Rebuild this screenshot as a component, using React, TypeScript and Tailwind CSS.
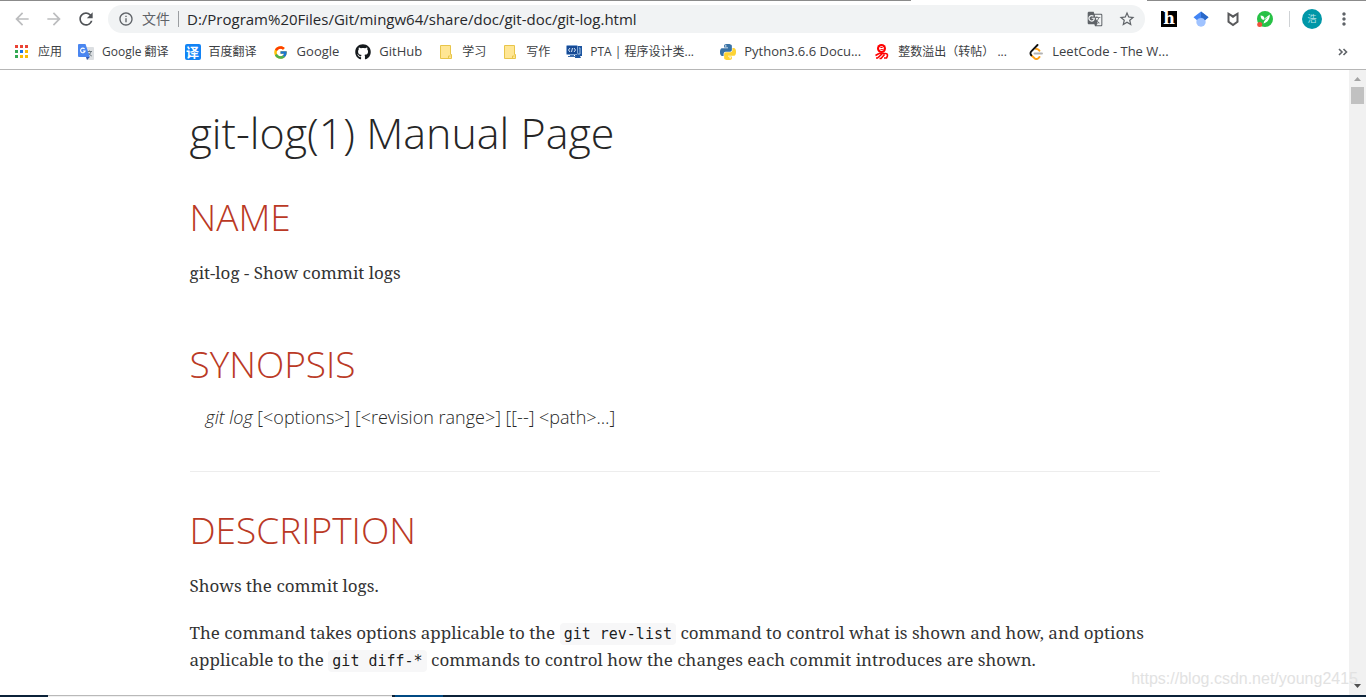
// App.tsx
// ================================================================
// GIT-LOG MANUAL PAGE
// ================================================================
// A browser window (toolbar + bookmarks bar) showing the local
// git-log documentation page.
// ================================================================

import React from "react";
import { FaGithub } from "react-icons/fa";
import { FcGoogle } from "react-icons/fc";
import {
  MdArrowBack,
  MdArrowForward,
  MdGTranslate,
  MdInfoOutline,
  MdMoreVert,
  MdRefresh,
  MdStarBorder,
} from "react-icons/md";

interface Bookmark {
  label: string;
  icon: React.ReactNode;
  wide?: boolean;
  /** Latin-only titles are set one step larger */
  latin?: boolean;
}

// ── Bookmark icons ─────────────────────────────────────────────
const APP_COLORS = [
  "#ea4335", "#ea4335", "#ea4335",
  "#34a853", "#1a73e8", "#fbbc04",
  "#34a853", "#fbbc04", "#fbbc04",
];

function AppsIcon() {
  return (
    <svg viewBox="0 0 16 16" className="size-4" aria-hidden="true">
      {APP_COLORS.map((fill, i) => (
        <rect key={i} x={1 + (i % 3) * 5} y={1 + Math.floor(i / 3) * 5} width="3" height="3" fill={fill} />
      ))}
    </svg>
  );
}

function TranslateIcon() {
  return (
    <svg viewBox="0 0 16 16" className="size-4" aria-hidden="true">
      <path d="M6 3h9a1 1 0 0 1 1 1v11a1 1 0 0 1-1 1H9z" fill="#dcdfe2" />
      <path d="M9 7.500h5M11.500 6.500v1M13 7.500c-.5 2-2 3.500-3.500 4.500M10.500 9c.7 1.300 2 2.500 3.300 3" stroke="#6f7a80" fill="none" />
      <path d="M1 0h6.500l4.300 13H1a1 1 0 0 1-1-1V1a1 1 0 0 1 1-1z" fill="#4a86f0" />
      <path d="M8 13h3.800L9 16z" fill="#3057b0" />
      <path d="M6.600 4.900A2.300 2.300 0 1 0 7.100 7H4.900" stroke="#fff" strokeWidth="1.100" fill="none" />
    </svg>
  );
}

function BaiduIcon() {
  return (
    <span className="flex size-4 items-center justify-center rounded-xs bg-[#1283f5] text-[13px] leading-4 font-bold text-white">
      译
    </span>
  );
}

function FolderIcon() {
  return (
    <svg viewBox="0 0 16 16" className="size-4" aria-hidden="true">
      <path d="M2.500 1.500h10v9h1v4h-11z" fill="#ffe694" stroke="#e8c54a" />
      <path d="M10.500 14.500v-2.500h2" fill="none" stroke="#e8c54a" />
    </svg>
  );
}

function PtaIcon() {
  return (
    <svg viewBox="0 0 16 16" className="size-4" aria-hidden="true">
      <path d="M11 2h5v10h-2l1 2H9v-3h2z" fill="#1c55a0" />
      <path d="M13 4h1v6h-2" fill="none" stroke="#9dbde2" />
      <rect x=".5" y="1.500" width="11" height="9" rx="1" fill="#174a94" stroke="#7fa5d4" />
      <path d="M4 4L2.500 6 4 8M8 4l1.500 2L8 8M6.500 4l-1 4" stroke="#d5e4f5" fill="none" />
      <path d="M4 11h4v1h2v1H2v-1h2z" fill="#3f6fae" />
    </svg>
  );
}

function PythonIcon() {
  return (
    <svg viewBox="0 0 24 24" className="size-4" aria-hidden="true">
      <path
        fill="#3872a5"
        d="M14.25.18l.9.2.73.26.59.3.45.32.34.34.25.34.16.33.1.3.04.26.02.2-.01.13V8.5l-.05.63-.13.55-.21.46-.26.38-.3.31-.33.25-.35.19-.35.14-.33.1-.3.07-.26.04-.21.02H8.77l-.69.05-.59.14-.5.22-.41.27-.33.32-.27.35-.2.36-.15.37-.1.35-.07.32-.04.27-.02.21v3.06H3.17l-.21-.03-.28-.07-.32-.12-.35-.18-.36-.26-.36-.36-.35-.46-.32-.59-.28-.73-.21-.88-.14-1.05-.05-1.23.06-1.22.16-1.04.24-.87.32-.71.36-.57.4-.44.42-.33.42-.24.4-.16.36-.1.32-.05.24-.01h.16l.06.01h8.16v-.83H6.18l-.01-2.75-.02-.37.05-.34.11-.31.17-.28.25-.26.31-.23.38-.2.44-.18.51-.15.58-.12.64-.1.71-.06.77-.04.84-.02 1.27.05zm-6.3 1.98l-.23.33-.08.41.08.41.23.34.33.22.41.09.41-.09.33-.22.23-.34.08-.41-.08-.41-.23-.33-.33-.22-.41-.09-.41.09z"
      />
      <path
        fill="#fdd335"
        d="M21.04 6.11l.28.06.32.12.35.18.36.27.36.35.35.47.32.59.28.73.21.88.14 1.04.05 1.23-.06 1.23-.16 1.04-.24.86-.32.71-.36.57-.4.45-.42.33-.42.24-.4.16-.36.09-.32.05-.24.02-.16-.01h-8.22v.82h5.84l.01 2.76.02.36-.05.34-.11.31-.17.29-.25.25-.31.24-.38.2-.44.17-.51.15-.58.13-.64.09-.71.07-.77.04-.84.01-1.27-.04-1.07-.14-.9-.2-.73-.25-.59-.3-.45-.33-.34-.34-.25-.34-.16-.33-.1-.3-.04-.25-.02-.2.01-.13v-5.34l.05-.64.13-.54.21-.46.26-.38.3-.32.33-.24.35-.2.35-.14.33-.1.3-.06.26-.04.21-.02.13-.01h5.84l.69-.05.59-.14.5-.21.41-.28.33-.32.27-.35.2-.36.15-.36.1-.35.07-.32.04-.28.02-.21V6.07h2.09l.14.01z"
      />
      <circle cx="15.200" cy="20.600" r="1.100" fill="#fff" />
    </svg>
  );
}

function YiIcon() {
  return (
    <svg viewBox="0 0 16 16" className="size-4" aria-hidden="true" fill="none">
      <circle cx="7.500" cy="4.500" r="4.500" fill="#f00" />
      <path d="M5.500 4.500h4c0-2.700-4-2.700-4 0 0 2.200 2.500 2.400 4 1.300" stroke="#fff" />
      <path d="M5 9.500L1.500 11.500M5 9.500h6.500c2.500 0 2.500 2 1 4.500H10M8 10l-4.500 4H2M10.500 10.500L7 14.500H5.500" stroke="#f00" strokeWidth="1.600" />
    </svg>
  );
}

function LeetCodeIcon() {
  return (
    <svg viewBox="0 0 16 16" className="size-4" aria-hidden="true" fill="none" strokeWidth="1.900" strokeLinecap="round">
      <path d="M6.500 9.500H14" stroke="#b3b3b3" />
      <path d="M11.500 13l-1.300 1.300a2.500 2.500 0 0 1-3.600 0L3.500 11.500" stroke="#ffa116" />
      <path d="M8 5a2.500 2.500 0 0 1 2.200.5l1.300 1.200" stroke="#ffa116" />
      <path d="M9.500 1L3.300 7.300a2.800 2.800 0 0 0 0 4" stroke="#111" />
    </svg>
  );
}

const BOOKMARKS: Bookmark[] = [
  { label: "应用", icon: <AppsIcon /> },
  { label: "Google 翻译", icon: <TranslateIcon /> },
  { label: "百度翻译", icon: <BaiduIcon /> },
  { label: "Google", icon: <FcGoogle size={15} aria-hidden="true" />, latin: true },
  { label: "GitHub", icon: <FaGithub size={16} className="text-[#15191d]" aria-hidden="true" />, latin: true },
  { label: "学习", icon: <FolderIcon /> },
  { label: "写作", icon: <FolderIcon /> },
  { label: "PTA | 程序设计类...", icon: <PtaIcon />, wide: true },
  { label: "Python3.6.6 Docu...", icon: <PythonIcon />, wide: true, latin: true },
  { label: "整数溢出（转帖） ...", icon: <YiIcon />, wide: true },
  { label: "LeetCode - The W...", icon: <LeetCodeIcon />, wide: true, latin: true },
];

// ── Extension icons ────────────────────────────────────────────
function HIcon() {
  return (
    <span className="flex size-4 items-center justify-center bg-black font-['DejaVu_Serif',serif] text-base leading-4 font-bold text-white">
      h
    </span>
  );
}

function ScholarIcon() {
  return (
    <svg viewBox="0 0 16 16" className="size-4" aria-hidden="true">
      <circle cx="8" cy="11" r="4.700" fill="#a0c3ff" />
      <path d="M8 .5L.5 6.300 4 9.200a4.700 4.700 0 0 1 8 0l3.500-2.900z" fill="#4285f4" />
      <path d="M8 .5v6a4.700 4.700 0 0 1 4 2.700l3.500-2.900z" fill="#2a68c8" />
    </svg>
  );
}

function ShieldIcon() {
  return (
    <svg viewBox="0 0 16 16" className="size-4" aria-hidden="true">
      <path d="M2.500 1L8 4.200 13.500 1v10.200L8 15.200l-5.500-4zm2 3.500v5.700L8 12.700l3.500-2.500V4.500L8 7z" fill="#58595b" fillRule="evenodd" />
    </svg>
  );
}

function LeafIcon() {
  return (
    <svg viewBox="0 0 16 16" className="size-4" aria-hidden="true">
      <circle cx="8" cy="8" r="8" fill="#27c146" />
      <path d="M3.500 4.500c2.500 0 3.500 1 4 3L12.800 3.500c.2 4.500-2.300 8-6.300 9l1-3.200C5 9 3.800 7.500 3.500 4.500z" fill="#fff" />
      <path d="M7.500 7.500L7 9.800l3-3.300" fill="none" stroke="#27c146" strokeWidth=".8" />
      <circle cx="2.700" cy="13.500" r="2.500" fill="#f0513c" />
    </svg>
  );
}

const EXTENSIONS = [
  { label: "Hypothesis", icon: <HIcon /> },
  { label: "Scholar", icon: <ScholarIcon /> },
  { label: "WebAdvisor", icon: <ShieldIcon /> },
  { label: "Leaf", icon: <LeafIcon /> },
];

// ── Browser toolbar ────────────────────────────────────────────
function Toolbar() {
  return (
    <div className="flex h-8 items-center pr-2 pl-1.5">
      <button type="button" aria-label="Back" className="flex w-8 justify-center text-[#bcbdbf]">
        <MdArrowBack size={20} />
      </button>
      <button type="button" aria-label="Forward" className="flex w-8 justify-center text-[#bcbdbf]">
        <MdArrowForward size={20} />
      </button>
      <button type="button" aria-label="Reload" className="flex w-8 justify-center text-[#505357]">
        <MdRefresh size={20} />
      </button>

      <div className="ml-1.5 flex h-7 min-w-0 flex-1 items-center rounded-full bg-[#f1f3f4] pr-0.5 pl-2.5 text-[#5f6368]">
        <MdInfoOutline size={16} className="shrink-0" aria-hidden="true" />
        <label htmlFor="address" className="ml-2 shrink-0 text-sm">
          文件
        </label>
        <span className="mx-2 h-4 w-px shrink-0 bg-[#9b9ea1]" />
        <input
          id="address"
          type="text"
          defaultValue="D:/Program%20Files/Git/mingw64/share/doc/git-doc/git-log.html"
          className="min-w-0 flex-1 bg-transparent text-[15px] text-[#27282b] outline-none"
        />
        <button type="button" aria-label="Translate this page" className="flex w-8 shrink-0 justify-center">
          <MdGTranslate size={16} />
        </button>
        <button type="button" aria-label="Bookmark this page" className="flex w-8 shrink-0 justify-center">
          <MdStarBorder size={18} />
        </button>
      </div>

      <div className="ml-2 flex items-center">
        {EXTENSIONS.map((ext) => (
          <button key={ext.label} type="button" aria-label={ext.label} className="flex w-8 justify-center">
            {ext.icon}
          </button>
        ))}
      </div>
      <span className="ml-2 h-4 w-px bg-[#cfd2d5]" />
      <button
        type="button"
        aria-label="Profile"
        className="ml-3 flex size-5 items-center justify-center rounded-full bg-[#0097a7] text-[9px] text-[#b9e3e8]"
      >
        浩
      </button>
      <button type="button" aria-label="Menu" className="ml-2 flex w-7 justify-center text-[#5f6368]">
        <MdMoreVert size={20} />
      </button>
    </div>
  );
}

function BookmarksBar() {
  return (
    <nav className="flex h-[35px] items-center justify-between border-b border-[#b6b6b6] pr-[18px] pl-3.5 text-[#3c4043]">
      <ul className="flex min-w-0 items-center gap-4">
        {BOOKMARKS.map((item) => (
          <li
            key={item.label}
            className={`shrink-0 ${item.wide ? "w-[138px]" : ""} ${item.latin ? "text-[13px]" : "text-xs"}`}
          >
            <a href="#" className="flex h-5 items-center gap-2 whitespace-nowrap">
              <span className="flex w-4 shrink-0 justify-center">{item.icon}</span>
              {item.label}
            </a>
          </li>
        ))}
      </ul>
      <button type="button" aria-label="More bookmarks" className="text-[#5f6368]">
        <svg viewBox="0 0 10 8" className="h-2 w-2.5" fill="none" stroke="currentColor" strokeWidth="1.600" aria-hidden="true">
          <path d="M1 1l3 3-3 3M5.500 1l3 3-3 3" />
        </svg>
      </button>
    </nav>
  );
}

// ── Manual page ────────────────────────────────────────────────
function SectionTitle({ children }: { children: React.ReactNode }) {
  return (
    <h2 className="font-['Open_Sans',sans-serif] text-[37px] leading-11 font-light text-[#ba3925]">
      {children}
    </h2>
  );
}

function Code({ children }: { children: React.ReactNode }) {
  return (
    <code className="rounded bg-[#f7f7f8] px-1 py-0.5 font-['DejaVu_Sans_Mono',monospace] text-[15px] leading-none text-black/90">
      {children}
    </code>
  );
}

function ManualPage() {
  return (
    <main className="mx-auto max-w-[970px] font-['Noto_Serif','DejaVu_Serif',serif] text-[17px] leading-[27px] text-[#333333]">
      <h1 className="pt-9 font-['Open_Sans',sans-serif] text-[43px] leading-[53px] font-light text-[#262626]">
        git-log(1) Manual Page
      </h1>

      <section className="pt-9">
        <SectionTitle>NAME</SectionTitle>
        <p className="mt-5">git-log - Show commit logs</p>
      </section>

      <section className="border-b border-[#ededed] pt-14 pb-10">
        <SectionTitle>SYNOPSIS</SectionTitle>
        <p className="mt-[18px] pl-4 font-['Open_Sans',sans-serif] text-lg leading-[27px] font-light text-[#262626]">
          <em>git log</em> [&lt;options&gt;] [&lt;revision range&gt;] [[--] &lt;path&gt;…]
        </p>
      </section>

      <section className="pt-9">
        <SectionTitle>DESCRIPTION</SectionTitle>
        <p className="mt-5">Shows the commit logs.</p>
        <p className="mt-5">
          The command takes options applicable to the <Code>git rev-list</Code> command to control what is shown
          and how, and options applicable to the <Code>git diff-*</Code> commands to control how the changes each
          commit introduces are shown.
        </p>
      </section>
    </main>
  );
}

function Scrollbar() {
  return (
    <div className="flex w-[17px] shrink-0 flex-col items-center bg-[#f1f1f1]" aria-hidden="true">
      <svg viewBox="0 0 17 17" className="size-[17px]">
        <path d="M5 11l3.500-4 3.500 4z" fill="#a3a3a3" />
      </svg>
      <div className="h-[17px] w-[13px] bg-[#c1c1c1]" />
      <svg viewBox="0 0 17 17" className="mt-auto size-[17px]">
        <path d="M5 6l3.500 4L12 6z" fill="#505050" />
      </svg>
    </div>
  );
}

export default function App() {
  return (
    <div className="flex h-screen flex-col overflow-hidden bg-white font-['Open_Sans','Noto_Sans_CJK_SC',sans-serif]">
      {/* ── Window edge, open under the active tab ───────────── */}
      <div className="flex h-[3px] shrink-0 justify-between">
        <div className="h-px w-2/3 bg-[#8b8b8b]" />
        <div className="h-px w-4/25 bg-[#8b8b8b]" />
      </div>
      <header className="shrink-0">
        <Toolbar />
        <BookmarksBar />
      </header>

      <div className="relative flex min-h-0 flex-1">
        <div className="min-w-0 flex-1 overflow-hidden">
          <ManualPage />
        </div>
        <Scrollbar />
        <span className="absolute right-2 bottom-1.5 font-['Liberation_Sans',sans-serif] text-base leading-5 text-[#e2e2e2]">
          https://blog.csdn.net/young2415
        </span>
      </div>

      {/* ── Top edge of the taskbar ──────────────────────────── */}
      <div className="flex h-0.5 shrink-0 bg-[#0b2239]">
        <div className="ml-12 w-[344px] border-t border-[#b9b9b9] bg-[#f0f0f0]" />
        <div className="ml-[3px] w-12 bg-[#004a83]" />
      </div>
    </div>
  );
}
